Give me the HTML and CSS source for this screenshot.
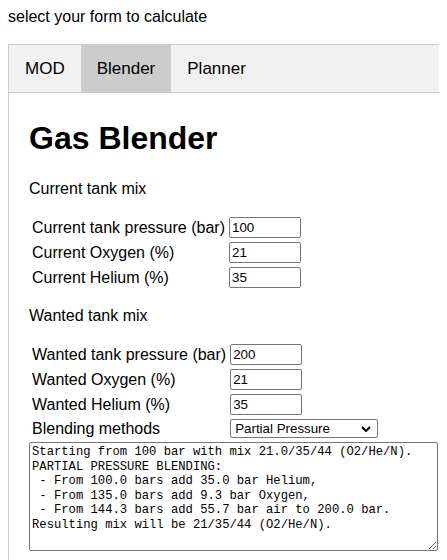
FILE: index.html
```html
<!DOCTYPE html>
<html>
<head>
<meta charset="utf-8">
<link rel="stylesheet" href="styles.css">
</head>
<body>
<div class="intro">select your form to calculate</div>
<div class="tab">
  <button class="tablink">MOD</button>
  <button class="tablink active">Blender</button>
  <button class="tablink">Planner</button>
</div>
<div class="tabcontent">
  <h1 class="title">Gas Blender</h1>
  <p class="section">Current tank mix</p>
  <table class="form">
    <tr><td>Current tank pressure (bar)</td><td><input class="num" type="text" value="100"></td></tr>
    <tr><td>Current Oxygen (%)</td><td><input class="num" type="text" value="21"></td></tr>
    <tr><td>Current Helium (%)</td><td><input class="num" type="text" value="35"></td></tr>
  </table>
  <p class="section">Wanted tank mix</p>
  <table class="form">
    <tr><td>Wanted tank pressure (bar)</td><td><input class="num" type="text" value="200"></td></tr>
    <tr><td>Wanted Oxygen (%)</td><td><input class="num" type="text" value="21"></td></tr>
    <tr><td>Wanted Helium (%)</td><td><input class="num" type="text" value="35"></td></tr>
    <tr><td>Blending methods</td><td><select class="method"><option>Partial Pressure</option></select></td></tr>
  </table>
  <textarea class="result">Starting from 100 bar with mix 21.0/35/44 (O2/He/N).
PARTIAL PRESSURE BLENDING:
 - From 100.0 bars add 35.0 bar Helium,
 - From 135.0 bars add 9.3 bar Oxygen,
 - From 144.3 bars add 55.7 bar air to 200.0 bar.
Resulting mix will be 21/35/44 (O2/He/N).</textarea>
</div>
</body>
</html>
```

FILE: styles.css
```css
html, body {
  overflow: hidden;
}
body {
  margin: 8px;
  font-family: "Liberation Sans", Arial, sans-serif;
  font-size: 16px;
  color: #000;
  background: #fff;
}
.intro {
  line-height: 18px;
}
.tab {
  margin-top: 18px;
  display: flex;
  border: 1px solid #ccc;
  border-right: none;
  background: #f1f1f1;
  margin-right: -20px;
}
.tablink {
  font-family: "Liberation Sans", Arial, sans-serif;
  font-size: 17px;
  color: #000;
  background: inherit;
  border: none;
  outline: none;
  padding: 14px 16px;
  margin: 0;
  line-height: 19px;
}
.tablink.active {
  background: #ccc;
}
.tabcontent {
  border-left: 1px solid #ccc;
  padding: 6px 12px 0 20px;
  height: 600px;
}
.title {
  font-size: 32px;
  font-weight: bold;
  margin: 21px 0 23px;
  line-height: 37px;
}
.section {
  margin: 16px 0;
  line-height: 18px;
}
.form {
  border-spacing: 2px;
}
.form td {
  padding: 1px;
  font-size: 16px;
}
.num {
  width: 72px;
  height: 21px;
  box-sizing: border-box;
  border: 1px solid #767676;
  border-radius: 2px;
  padding: 1px 2px;
  font-family: "Liberation Sans", Arial, sans-serif;
  font-size: 13.33px;
  color: #000;
  margin: 0;
  display: block;
}
.method {
  appearance: none;
  -webkit-appearance: none;
  width: 148px;
  height: 19px;
  box-sizing: border-box;
  border: 1px solid #767676;
  border-radius: 2px;
  padding: 0 20px 0 4px;
  font-family: "Liberation Sans", Arial, sans-serif;
  font-size: 13.33px;
  color: #000;
  background: #fff url("data:image/svg+xml;utf8,<svg xmlns='http://www.w3.org/2000/svg' width='10' height='6' viewBox='0 0 10 6'><path d='M1 1 L5 5 L9 1' fill='none' stroke='black' stroke-width='2'/></svg>") no-repeat right 6px center;
  margin: 0;
  display: block;
}
.result {
  display: block;
  width: 409px;
  height: 109px;
  box-sizing: border-box;
  border: 1px solid #767676;
  border-radius: 2px;
  padding: 2px;
  margin: 1px 0 0;
  font-family: "Liberation Mono", "DejaVu Sans Mono", monospace;
  font-size: 12.2px;
  line-height: 14.6px;
  color: #000;
  resize: both;
  overflow: hidden;
}
```
